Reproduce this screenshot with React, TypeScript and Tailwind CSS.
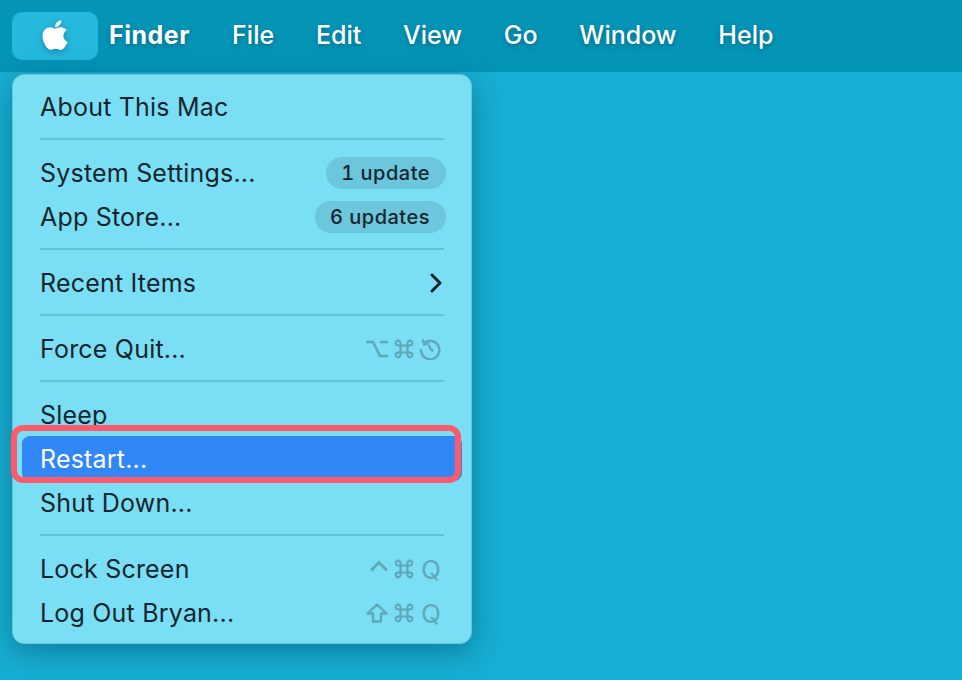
import { FaApple } from "react-icons/fa";

const menuBar = ["File", "Edit", "View", "Go", "Window", "Help"];

function CommandKey() {
  return (
    <svg viewBox="0 0 20 20" className="ml-[6px] mr-[5px] h-5 w-5" fill="none" stroke="currentColor" strokeWidth="2.2">
      <path d="M6.5 6.5h7v7h-7zM6.5 6.5H4.2a2.4 2.4 0 1 1 2.3-2.3zM13.5 6.5V4.2a2.4 2.4 0 1 1 2.3 2.3zM13.5 13.5h2.3a2.4 2.4 0 1 1-2.3 2.3zM6.5 13.5v2.3a2.4 2.4 0 1 1-2.3-2.3z" />
    </svg>
  );
}

function OptionKey() {
  return (
    <svg viewBox="0 0 22 18" className="h-[18px] w-[22px]" fill="none" stroke="currentColor" strokeWidth="2.6">
      <path d="M0 2h7l7 14h8M14 2h8" />
    </svg>
  );
}

function RestartKey() {
  return (
    <svg viewBox="0 0 22 22" className="h-[22px] w-[22px]" fill="none" stroke="currentColor" strokeWidth="2.4">
      <path d="M5 5.2A9.2 9.2 0 1 1 2 11" />
      <path d="M3.6 1.2 5.2 6.4 10.4 5" strokeWidth="2.2" />
      <path d="M9.5 7l2.5 4.5 2.5 1.5" strokeWidth="2.2" />
    </svg>
  );
}

function ControlKey() {
  return (
    <svg viewBox="0 0 18 12" className="mb-[6px] h-3 w-[18px]" fill="none" stroke="currentColor" strokeWidth="3">
      <path d="M1 10.5 9 2.5l8 8" />
    </svg>
  );
}

function ShiftKey() {
  return (
    <svg viewBox="0 0 22 20" className="h-5 w-[22px]" fill="none" stroke="currentColor" strokeWidth="2.4">
      <path d="M11 1.5 1.5 10.5H7V18.5H15V10.5H20.5Z" strokeLinejoin="round" />
    </svg>
  );
}

function Divider() {
  return (
    <div className="flex h-[22px] items-center pb-[2px] pl-[27px] pr-[27px]">
      <div className="h-[2px] w-full bg-[#61c2d9]" />
    </div>
  );
}

function Row({ label, children, active }: { label: string; children?: React.ReactNode; active?: boolean }) {
  return (
    <div
      className={
        active
          ? "mx-[9px] flex h-[44px] items-center justify-between rounded-[8px] bg-[#3287f6] pl-[18px] text-white shadow-[0_-1px_0_#3287f6]"
          : "flex h-[44px] items-center justify-between pl-[27px] pr-[25px]"
      }
    >
      <span className="pt-[2px] tracking-[0.2px]">{label}</span>
      {children}
    </div>
  );
}

function Badge({ wide, children }: { wide?: boolean; children: React.ReactNode }) {
  return (
    <span
      className={
        wide
          ? "flex h-[32px] w-[131px] items-center justify-end rounded-full bg-[#6cc6dc] pr-[16px] text-[20px] font-medium tabular-nums tracking-[0.5px]"
          : "flex h-[32px] w-[120px] items-center justify-end rounded-full bg-[#6cc6dc] pr-[16px] text-[20px] font-medium tabular-nums tracking-[0.5px]"
      }
    >
      {children}
    </span>
  );
}

function Keys({ children }: { children: React.ReactNode }) {
  return <span className="flex items-center pr-[5px] text-[#5fa8ba]">{children}</span>;
}

export default function App() {
  return (
    <div className="relative flex h-[680px] w-[962px] flex-col overflow-hidden bg-[#17afd3] font-['Inter',sans-serif] text-[#15252d]">
      <div className="flex h-[72px] shrink-0 items-start bg-[#0494b6] pl-[12px] pt-[12px] text-[25px] text-white [text-shadow:0_2px_5px_rgba(0,60,80,0.45)]">
        <div className="flex h-[48px] w-[86px] items-center justify-center rounded-[10px] bg-[#25b9de]">
          <FaApple className="mb-[2px] h-[34px] w-[34px] drop-shadow-[0_2px_3px_rgba(0,60,80,0.4)]" />
        </div>
        <div className="flex h-[48px] items-center gap-[41.75px] pl-[11px]">
          <span className="mr-[0.5px] font-bold tracking-[0.5px]">Finder</span>
          {menuBar.map((m) => (
            <span key={m} className="font-medium">
              {m}
            </span>
          ))}
        </div>
      </div>

      <div className="ml-[12px] mt-[2px] h-[570px] w-[460px] rounded-[12px] border border-[#62c5dc] bg-[#7adff5] pt-[10px] text-[25px] shadow-[0_8px_30px_rgba(0,50,70,0.4)]">
        <Row label="About This Mac" />
        <Divider />
        <Row label="System Settings...">
          <Badge>1 update</Badge>
        </Row>
        <Row label="App Store...">
          <Badge wide>6 updates</Badge>
        </Row>
        <Divider />
        <Row label="Recent Items">
          <svg viewBox="0 0 12 20" className="mr-[4px] h-5 w-3" fill="none" stroke="currentColor" strokeWidth="3" strokeLinecap="round" strokeLinejoin="round">
            <path d="M2 2l8 8-8 8" />
          </svg>
        </Row>
        <Divider />
        <Row label="Force Quit...">
          <Keys>
            <OptionKey />
            <CommandKey />
            <RestartKey />
          </Keys>
        </Row>
        <Divider />
        <Row label="Sleep" />
        <Row label="Restart..." active />
        <Row label="Shut Down..." />
        <Divider />
        <Row label="Lock Screen">
          <Keys>
            <ControlKey />
            <CommandKey />
            <span className="w-[22px] text-right text-[26px]">Q</span>
          </Keys>
        </Row>
        <Row label="Log Out Bryan...">
          <Keys>
            <ShiftKey />
            <CommandKey />
            <span className="w-[22px] text-right text-[26px]">Q</span>
          </Keys>
        </Row>
      </div>

      <div className="absolute left-[11px] top-[425px] h-[58px] w-[450px] rounded-[12px] border-[6px] border-[#ff5a6b]" />
    </div>
  );
}
